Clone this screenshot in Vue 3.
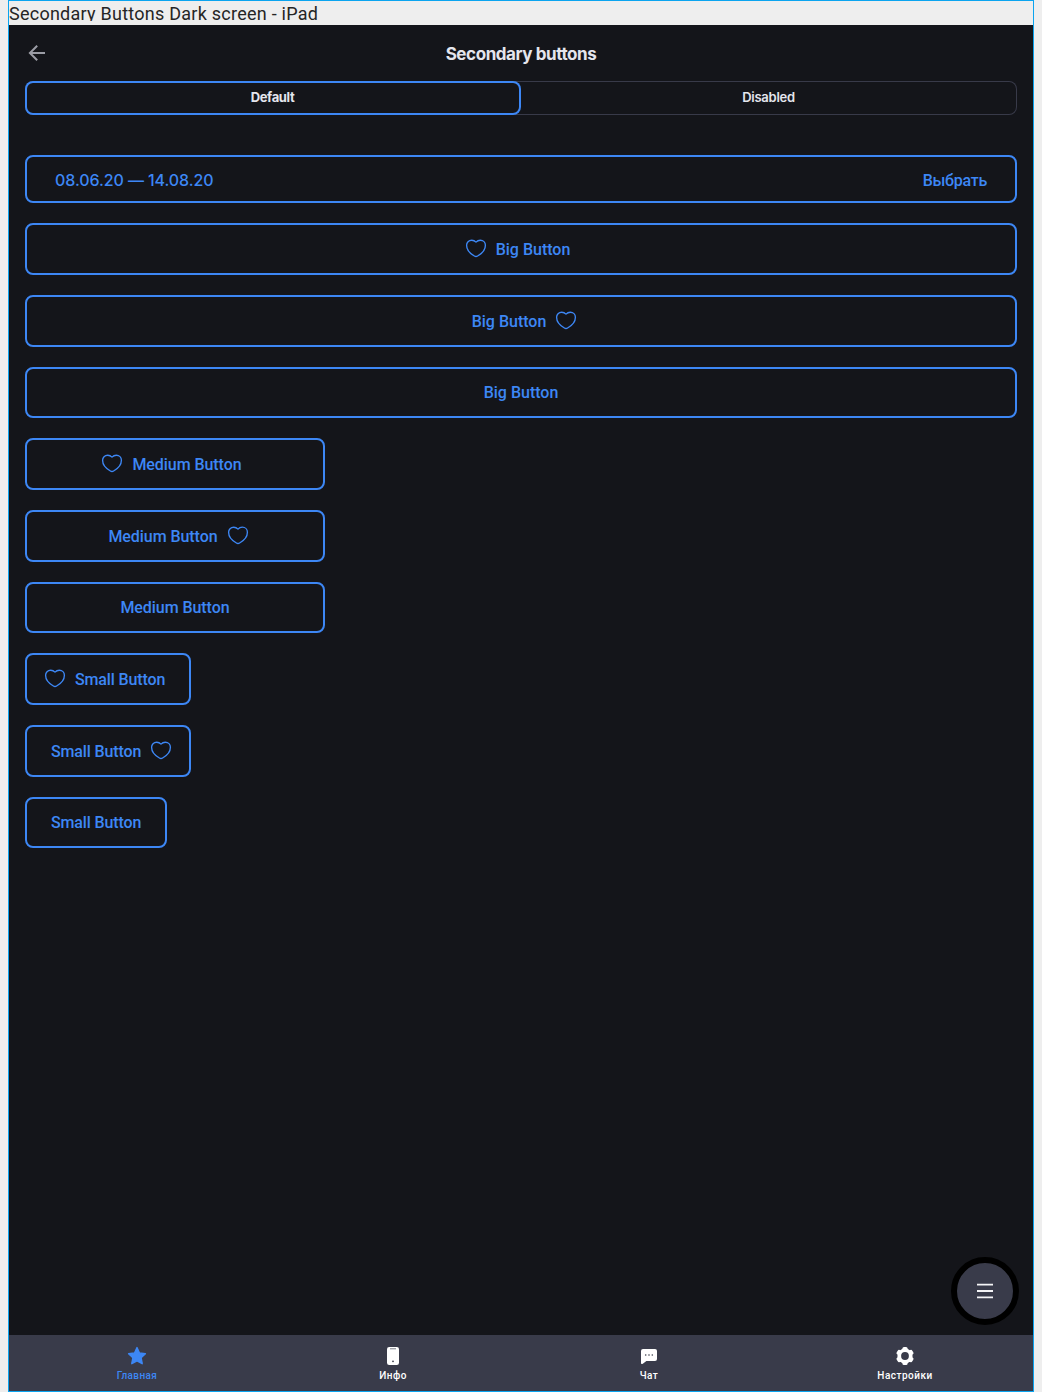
<script setup>
const buttons = [
  { size: 'big', label: 'Big Button', icon: 'left' },
  { size: 'big', label: 'Big Button', icon: 'right' },
  { size: 'big', label: 'Big Button', icon: '' },
  { size: 'medium', label: 'Medium Button', icon: 'left' },
  { size: 'medium', label: 'Medium Button', icon: 'right' },
  { size: 'medium', label: 'Medium Button', icon: '' },
  { size: 'small', label: 'Small Button', icon: 'left' },
  { size: 'small', label: 'Small Button', icon: 'right' },
  { size: 'small', label: 'Small Button', icon: '' },
]
</script>

<template>
  <div class="canvas">
    <div class="frame">
      <div class="frame-title">Secondary Buttons Dark screen - iPad</div>
      <div class="screen">
        <header class="header">
          <svg class="back" width="24" height="24" viewBox="0 0 24 24" fill="none" stroke="#9b9ca5" stroke-width="2">
            <path d="M20 12H5M12.2 4.7L4.9 12l7.3 7.3" />
          </svg>
          <h1>Secondary buttons</h1>
        </header>

        <div class="tabs">
          <div class="tab active"><span>Default</span></div>
          <div class="tab"><span>Disabled</span></div>
        </div>

        <main class="list">
          <button class="btn date">
            <span class="range">08.06.20 — 14.08.20</span>
            <span class="pick">Выбрать</span>
          </button>
          <button v-for="(b, i) in buttons" :key="i" class="btn" :class="[b.size, b.icon && 'icon-' + b.icon]">
            <svg v-if="b.icon" class="heart" width="24" height="24" viewBox="0 0 24 24" fill="none" stroke="#3d87f5" stroke-width="1.35" stroke-linejoin="round">
              <path d="M12 5.1C10.7 3.7 9.3 3.2 7.7 3.2C4.7 3.2 2.6 5.4 2.6 8.3C2.6 12.7 6.2 16.7 10.4 19Q12 20.1 13.6 19C17.8 16.7 21.4 12.7 21.4 8.3C21.4 5.4 19.3 3.2 16.3 3.2C14.7 3.2 13.3 3.7 12 5.1Z" />
            </svg>
            <span class="label">{{ b.label }}</span>
          </button>
        </main>

        <button class="fab">
          <svg width="16" height="16" viewBox="0 0 16 16" stroke="#f4f4f6" stroke-width="1.8">
            <path d="M0 1.7H16M0 8H16M0 14.3H16" />
          </svg>
        </button>

        <nav class="nav">
          <div class="nav-item current">
            <svg width="20" height="20" viewBox="0 0 20 20" fill="#3d87f5" stroke="#3d87f5" stroke-width="1.4" stroke-linejoin="round">
              <path d="M10 1.6L12.5 7L18.4 7.7L14.1 11.7L15.2 17.7L10 14.8L4.8 17.7L5.9 11.7L1.6 7.7L7.5 7Z" />
            </svg>
            <span>Главная</span>
          </div>
          <div class="nav-item">
            <svg width="20" height="20" viewBox="0 0 20 20">
              <rect x="4" y="1" width="12" height="18" rx="2.2" fill="#fff" />
              <path d="M7 2.8H13" stroke="#7b7c87" stroke-width="1" />
              <circle cx="10" cy="15.3" r=".9" fill="#393b4a" />
            </svg>
            <span>Инфо</span>
          </div>
          <div class="nav-item">
            <svg width="20" height="20" viewBox="0 0 20 20">
              <path d="M4 3H16Q18 3 18 5V13Q18 15 16 15H7.4L3.8 17.7Q2 18.6 2 17V5Q2 3 4 3Z" fill="#fff" />
              <g fill="#393b4a"><circle cx="6.7" cy="9" r=".8" /><circle cx="10" cy="9" r=".8" /><circle cx="13.3" cy="9" r=".8" /></g>
            </svg>
            <span>Чат</span>
          </div>
          <div class="nav-item">
            <svg width="20" height="20" viewBox="0 0 20 20">
              <g fill="#fff">
                <circle cx="10" cy="10" r="7.6" />
                <g v-for="a in [0, 60, 120]" :key="a" :transform="`rotate(${a} 10 10)`">
                  <rect x="7.4" y="1" width="5.2" height="18" rx="1.6" />
                </g>
              </g>
              <circle cx="10" cy="10" r="3.9" fill="#393b4a" />
            </svg>
            <span>Настройки</span>
          </div>
        </nav>
      </div>
    </div>
  </div>
</template>

<style>
body { background: #eee; }
</style>

<style scoped>
* { box-sizing: border-box; }
.canvas {
  width: 1042px;
  height: 1392px;
  padding-left: 8px;
  background: #eee;
  overflow: hidden;
  font-family: Roboto, "Liberation Sans", sans-serif;
}
.frame {
  width: 1026px;
  height: 1392px;
  border: 1px solid #0ba4ef;
  display: flex;
  flex-direction: column;
}
.frame-title {
  height: 20px;
  margin-bottom: 4px;
  overflow: hidden;
  font-size: 18px;
  line-height: 26px;
  letter-spacing: .25px;
  color: #252525;
  white-space: nowrap;
}
.screen {
  position: relative;
  flex: 1;
  display: flex;
  flex-direction: column;
  background: #14151a;
}
.header {
  height: 56px;
  display: grid;
  grid-template-columns: 24px 1fr 24px;
  align-items: center;
  padding: 0 16px;
}
.header h1 {
  margin: 2px 0 0;
  text-align: center;
  font: 650 17px/24px Inter, sans-serif;
  letter-spacing: -.42px;
  color: #e4e5ed;
}
.tabs {
  height: 34px;
  margin: 0 16px;
  display: flex;
  border-radius: 8px;
  box-shadow: inset 0 0 0 1px #383a49;
}
.tab {
  flex: 1;
  text-align: center;
  font: 600 13px/32px Inter, sans-serif;
  letter-spacing: -.25px;
  color: #e4e5ed;
}
.tab.active {
  border-radius: 8px;
  box-shadow: inset 0 0 0 2px #3d87f5;
  font-weight: 700;
  letter-spacing: -.35px;
}
.tab span { margin-right: 1px; }
.list {
  display: flex;
  flex-direction: column;
  align-items: flex-start;
  gap: 20px;
  padding: 40px 16px 0;
}
.btn {
  height: 51px;
  padding: 0 24px;
  display: flex;
  align-items: center;
  justify-content: center;
  gap: 8px;
  border: 2px solid #3d87f5;
  border-radius: 8px;
  background: transparent;
  color: #3d87f5;
  font: 500 16px/20px Roboto, sans-serif;
  white-space: nowrap;
}
.big, .date { width: 100%; }
.medium { width: 300px; }
.medium .label { letter-spacing: -.06px; }
.small .label { letter-spacing: -.13px; }
.date {
  height: 48px;
  justify-content: space-between;
  padding: 4px 28px 0;
}
.range {
  padding-bottom: 2px;
  font-family: Inter, sans-serif;
  font-weight: 450;
  letter-spacing: -.08px;
}
.pick { letter-spacing: -.25px; }
.icon-left, .icon-right { height: 52px; }
.icon-left .label, .icon-right .label { padding-top: 2px; }
.icon-left { padding-left: 16px; }
.icon-right { padding-right: 16px; flex-direction: row-reverse; }
.heart { flex: none; }
.fab {
  position: absolute;
  right: 14px;
  bottom: 66px;
  width: 68px;
  height: 68px;
  padding: 0;
  display: flex;
  align-items: center;
  justify-content: center;
  border: 6px solid #000;
  border-radius: 50%;
  background: #393b4a;
}
.nav {
  height: 56px;
  margin-top: auto;
  display: flex;
  background: #393b4a;
}
.nav-item {
  flex: 1;
  display: flex;
  flex-direction: column;
  align-items: center;
  padding-top: 11px;
  color: #fff;
  font-size: 10px;
  font-weight: 500;
  line-height: 12px;
  letter-spacing: .5px;
}
.nav-item span { margin-top: 4px; }
.current { color: #3d87f5; letter-spacing: .4px; }
</style>
